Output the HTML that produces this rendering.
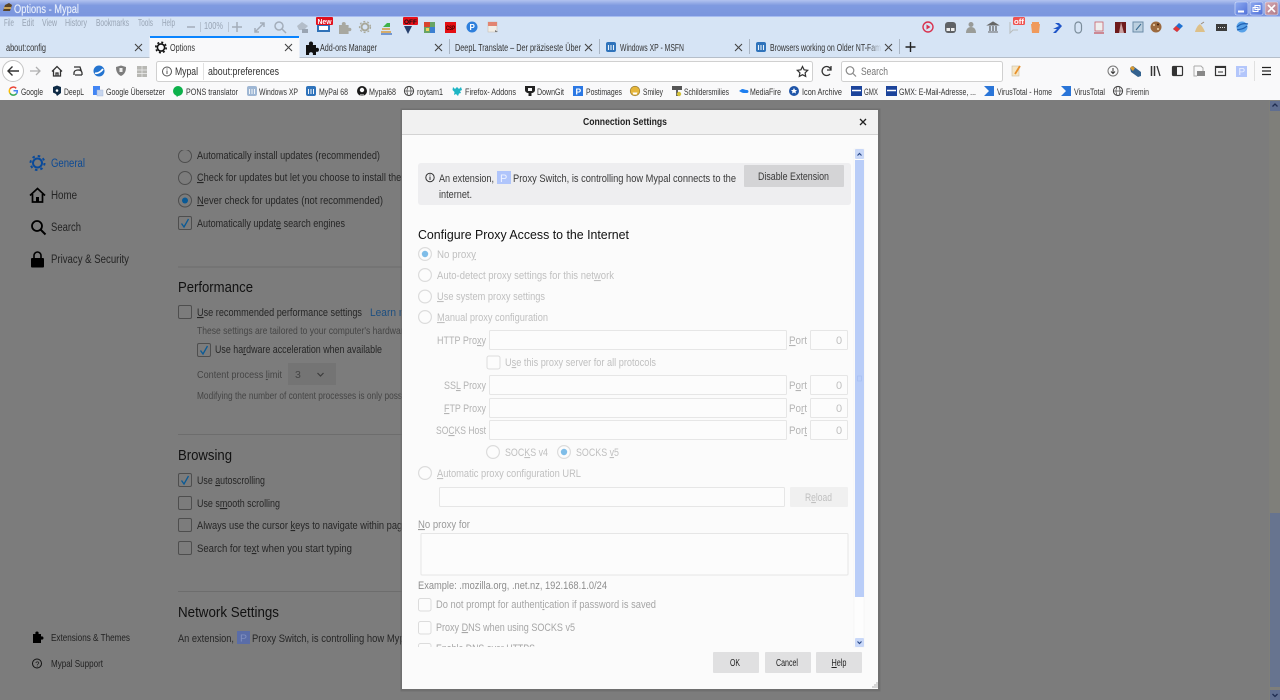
<!DOCTYPE html>
<html><head><meta charset="utf-8"><title>Options - Mypal</title>
<style>
html,body{margin:0;padding:0;background:#7c7c7c;width:1280px;height:700px;overflow:hidden}
svg{display:block;position:absolute;left:0;top:0;filter:blur(.3px)}
text{font-family:"Liberation Sans",sans-serif;font-size:10px;fill:#333;white-space:pre}
.u{text-decoration:underline}
.title{font-size:11.5px;fill:#e6edfb;stroke:#e6edfb;stroke-width:.2px}
.menu{font-size:10.5px;fill:#98a4b4}
.tab{font-size:10px;fill:#333}
.nav{font-size:11px;fill:#333}
.bm{font-size:9.5px;fill:#333}
.side{font-size:11.5px;fill:#242424}
.pg{font-size:11px;fill:#262626}
.pgl{font-size:10.5px;fill:#454545}
.h{font-size:15px;fill:#111}
.dis{font-size:11px;fill:#c0c0c0}
.dlg{font-size:11px;fill:#3a3a3a}
.lbl{font-size:11px;fill:#b4b4b4}
.f{fill:#fcfcfc;stroke:#e6e6e6}
.r{fill:#fcfcfc;stroke:#dcdcdc;stroke-width:1.2}
.c{fill:#fcfcfc;stroke:#dcdcdc;rx:2}
.pc{fill:#7c7c7c;stroke:#4e4e4e;stroke-width:1}
.ic{fill:none;stroke:#444;stroke-width:1.1}
.gi{fill:none;stroke:#a3adba;stroke-width:1.5}
.btn{fill:#e0e0e1}
</style></head><body>
<svg width="1280" height="700" viewBox="0 0 1280 700" xmlns="http://www.w3.org/2000/svg">
<defs>
<linearGradient id="tb" x1="0" y1="0" x2="0" y2="1"><stop offset="0" stop-color="#b3c3ef"/><stop offset=".3" stop-color="#7f9ae0"/><stop offset="1" stop-color="#7a95dd"/></linearGradient>
<linearGradient id="wb" x1="0" y1="0" x2="1" y2="1"><stop offset="0" stop-color="#8fabf0"/><stop offset="1" stop-color="#4f70d8"/></linearGradient>
<linearGradient id="wc" x1="0" y1="0" x2="1" y2="1"><stop offset="0" stop-color="#d6aab2"/><stop offset="1" stop-color="#b07a88"/></linearGradient>
<linearGradient id="fade" x1="0" y1="0" x2="1" y2="0"><stop offset="0" stop-color="#d6e4f5" stop-opacity="0"/><stop offset="1" stop-color="#d6e4f5"/></linearGradient>
<clipPath id="mainclip"><rect x="170" y="150" width="232" height="550"/></clipPath>
<clipPath id="dlgclip"><rect x="410" y="140" width="444" height="507"/></clipPath>
</defs>

<!-- window chrome -->
<rect width="1280" height="18" fill="url(#tb)"/>
<rect y="16" width="1280" height="1" fill="#a8bdf0"/>
<rect y="17" width="1280" height="41" fill="#d6e4f5"/>
<path d="M3 11 L5 5 L9 3 L12 5 L10 11 Z" fill="#5a4326"/><path d="M4 7h7v2H4z" fill="#c9a35c"/>
<text class="title" x="14" y="13" textLength="65" lengthAdjust="spacingAndGlyphs">Options - Mypal</text>
<rect x="1235" y="2" width="13" height="13" rx="2" fill="url(#wb)" stroke="#dfe8fb" stroke-width=".6"/><rect x="1238" y="10.5" width="6" height="2" fill="#fff"/>
<rect x="1250" y="2" width="13" height="13" rx="2" fill="url(#wb)" stroke="#dfe8fb" stroke-width=".6"/><path d="M1255 5.5h5v4h-5zM1253 7.5h5v4h-5z" fill="none" stroke="#fff"/>
<rect x="1265" y="2" width="13" height="13" rx="2" fill="url(#wc)" stroke="#dfe8fb" stroke-width=".6"/><path d="M1268 5l7 7M1275 5l-7 7" stroke="#fff" stroke-width="1.6"/>

<!-- menu -->
<text class="menu" y="26" x="4" textLength="10" lengthAdjust="spacingAndGlyphs">File</text>
<text class="menu" y="26" x="22" textLength="12" lengthAdjust="spacingAndGlyphs">Edit</text>
<text class="menu" y="26" x="42" textLength="15" lengthAdjust="spacingAndGlyphs">View</text>
<text class="menu" y="26" x="65" textLength="22" lengthAdjust="spacingAndGlyphs">History</text>
<text class="menu" y="26" x="96" textLength="33" lengthAdjust="spacingAndGlyphs">Bookmarks</text>
<text class="menu" y="26" x="138" textLength="15" lengthAdjust="spacingAndGlyphs">Tools</text>
<text class="menu" y="26" x="162" textLength="13" lengthAdjust="spacingAndGlyphs">Help</text>
<path class="gi" d="M187 27h8"/>
<path d="M200.500 22v10M228.500 22v10" stroke="#b9c5d4"/>
<text class="menu" y="29" x="204" textLength="19" lengthAdjust="spacingAndGlyphs">100%</text>
<path class="gi" d="M232 27h10M237 22v10"/>
<path class="gi" d="M255 32l9-9M260 23h4v4M255 28v4h4"/>
<circle class="gi" cx="279" cy="26" r="4"/><path class="gi" d="M282 29l4 4"/>
<path d="M297 26l5-4 6 4-4 4h-5z" fill="#b3bdc9"/><rect x="302" y="29" width="6" height="4" fill="#9aa5b3"/>

<!-- extension icons left -->
<rect x="317" y="23" width="13" height="9" fill="#2f72b8"/><rect x="319" y="26" width="9" height="4" fill="#fff"/>
<rect x="316" y="17" width="17" height="8" rx="1" fill="#e2101c"/>
<text x="317.500" y="24" style="font-size:7px;font-weight:bold;fill:#fff" textLength="14" lengthAdjust="spacingAndGlyphs">New</text>
<path d="M339 25h3c-.6-1.600.2-3 1.800-3s2.400 1.400 1.800 3h3v3c1.600-.6 2.800.2 2.800 1.500s-1.200 2.100-2.800 1.500v3h-9.600z" fill="#a8a8a0"/>
<circle cx="365" cy="27" r="3.500" fill="none" stroke="#a8a89a" stroke-width="2"/><circle cx="365" cy="27" r="5.500" fill="none" stroke="#a8a89a" stroke-width="1.200" stroke-dasharray="2 2"/>
<path d="M381 32h10M382 29h8" stroke="#d69a3d" stroke-width="1.500"/><path d="M383 27h7v-4h-3z" fill="#3fb24a"/><path d="M381 34h11" stroke="#4a78c0" stroke-width="1.400"/>
<path d="M404 26h8l-4 8z" fill="#27406e"/>
<rect x="403" y="17" width="15" height="8" rx="1" fill="#e8101a"/>
<text x="404" y="24" style="font-size:6.500px;font-weight:bold;fill:#111" textLength="13" lengthAdjust="spacingAndGlyphs">OFF</text>
<rect x="424" y="22" width="11" height="11" fill="#67a464"/><rect x="424" y="22" width="6" height="5" fill="#d8452f"/><rect x="430" y="27" width="5" height="6" fill="#3c7fd0"/><rect x="426" y="28" width="3" height="3" fill="#ecd25a"/>
<rect x="445" y="22" width="11" height="11" fill="#e50f13"/>
<text x="446" y="30" style="font-size:6px;font-weight:bold;fill:#300" textLength="9" lengthAdjust="spacingAndGlyphs">CSP</text>
<circle cx="472" cy="27" r="5.500" fill="#2e7fdc"/><text x="469.500" y="30" style="font-size:8px;font-weight:bold;fill:#fff">P</text>
<rect x="488" y="22" width="9" height="10" fill="#f1ede6" stroke="#c8c0b8" stroke-width=".6"/><rect x="488" y="22" width="9" height="4" fill="#e28470"/><path d="M495 30l3 2h-3z" fill="#777"/>

<!-- extension icons right -->
<circle cx="928" cy="27" r="5" fill="none" stroke="#d8324f" stroke-width="1.400"/><path d="M926.500 24.500v5l4-2.500z" fill="#d8324f"/>
<rect x="945" y="22" width="11" height="11" rx="3" fill="#5f6266"/><rect x="946.500" y="28" width="3.500" height="3" fill="#eee"/><rect x="951" y="28" width="3.500" height="3" fill="#eee"/>
<circle cx="971" cy="24.500" r="2.500" fill="#989a98"/><path d="M966 33c0-4 2-6 5-6s5 2 5 6z" fill="#9a9c98"/>
<path d="M988 25l5-3 5 3zM988 32h10" fill="#666" stroke="#666"/><path d="M990 26v5M993 26v5M996 26v5" stroke="#666" stroke-width="1.300"/>
<path d="M1010 22v11l3-3h5" fill="none" stroke="#b8bcbc"/>
<rect x="1013" y="17" width="12" height="8" rx="1.500" fill="#ef5350"/>
<text x="1014" y="24" style="font-size:7px;font-weight:bold;fill:#fff" textLength="10" lengthAdjust="spacingAndGlyphs">off</text>
<path d="M1031 24h9l-1 9h-7z" fill="#f09a5c"/><rect x="1032" y="22" width="7" height="2" fill="#f09a5c"/>
<path d="M1053 29l6-3-4-3h4l3 3-6 7h-3l4-4z" fill="#1f55c8"/>
<rect x="1075" y="22" width="6.500" height="11" rx="3.200" fill="none" stroke="#7b8d9b" stroke-width="1.200"/>
<rect x="1095" y="22" width="8" height="9" fill="#eee" stroke="#c9606a" stroke-width=".8"/><path d="M1094 33h10" stroke="#c9606a" stroke-width="1.400"/>
<rect x="1115" y="22" width="11" height="11" fill="#6e1b1c"/><path d="M1121 22l3 11h-5z" fill="#c9a0a0"/>
<rect x="1133" y="22" width="10" height="10" fill="#bcd0e0" stroke="#6b8ba8"/><path d="M1136 30l5-6" stroke="#36688f"/>
<circle cx="1156" cy="27" r="5.500" fill="#9c6a3f"/><circle cx="1154" cy="25" r="1" fill="#f0d7b0"/><circle cx="1158" cy="29" r="1" fill="#f0d7b0"/><circle cx="1158" cy="24.500" r="1" fill="#402010"/>
<path d="M1173 29l6-6 4 3-6 6z" fill="#1f70d0"/><path d="M1173 29l3-3 4 3-3 3z" fill="#e03636"/>
<path d="M1195 32c1-4 3-7 5-8 2 2 4 5 5 8z" fill="#ddc089"/><path d="M1201 24l3-2" stroke="#9b8b78"/>
<rect x="1216" y="24" width="11" height="7" fill="#3c3c3c"/><path d="M1218 27.500h7" stroke="#ddd" stroke-dasharray="1 1"/>
<circle cx="1242" cy="27" r="5.500" fill="#57a1e8"/><path d="M1237 27c3-3 7-4 11-3M1237 30c4-1 7-1 10-4" stroke="#1f5fb0" stroke-width="1.200" fill="none"/>

<!-- tabs -->
<rect y="57" width="1280" height="1" fill="#b5bec9"/>
<path d="M149.500 37h150v21h-150z" fill="#f9f9fa"/>
<rect x="150" y="36" width="149" height="2" fill="#0a84ff"/>
<path d="M449.500 39v15M599.500 39v15M749.500 39v15M899.500 39v15" stroke="#a9b5c4"/>
<text class="tab" x="6" y="51" textLength="40" lengthAdjust="spacingAndGlyphs">about:config</text>
<path class="ic" d="M135 44l7 7M142 44l-7 7"/>
<g fill="#111"><circle cx="161" cy="47.500" r="3.600" fill="none" stroke="#111" stroke-width="1.600"/><circle cx="161" cy="47.500" r="5.200" fill="none" stroke="#111" stroke-width="1.600" stroke-dasharray="2 2.100"/></g>
<text class="tab" x="170" y="51" textLength="25" lengthAdjust="spacingAndGlyphs">Options</text>
<path class="ic" d="M285 44l7 7M292 44l-7 7"/>
<path d="M306 45h3.200c-.8-2 .2-3.500 1.800-3.500s2.600 1.500 1.800 3.500H316v3c2-.8 3 .3 3 1.800s-1 2.600-3 1.800V55h-3.200c.6-1.800-.4-2.800-1.800-2.800s-2.400 1-1.800 2.800H306z" fill="#111"/>
<text class="tab" x="320" y="51" textLength="57" lengthAdjust="spacingAndGlyphs">Add-ons Manager</text>
<path class="ic" d="M435 44l7 7M442 44l-7 7"/>
<text class="tab" x="455" y="51" textLength="126" lengthAdjust="spacingAndGlyphs">DeepL Translate – Der präziseste Über</text>
<path class="ic" d="M585 44l7 7M592 44l-7 7"/>
<g><rect x="606" y="42" width="10" height="10" rx="2" fill="#2f73bb"/><path d="M608.500 50v-5M611 50v-5M613.500 50v-5" stroke="#e8f0f8" stroke-width="1.100"/></g>
<text class="tab" x="620" y="51" textLength="64" lengthAdjust="spacingAndGlyphs">Windows XP - MSFN</text>
<path class="ic" d="M735 44l7 7M742 44l-7 7"/>
<g><rect x="756" y="42" width="10" height="10" rx="2" fill="#2f73bb"/><path d="M758.500 50v-5M761 50v-5M763.500 50v-5" stroke="#e8f0f8" stroke-width="1.100"/></g>
<text class="tab" x="770" y="51" textLength="111" lengthAdjust="spacingAndGlyphs">Browsers working on Older NT-Fam</text>
<rect x="868" y="42" width="14" height="12" fill="url(#fade)"/>
<path class="ic" d="M885 44l7 7M892 44l-7 7"/>
<path d="M910.500 42v10M905.500 47h10" stroke="#222" stroke-width="1.400"/>

<!-- nav bar -->
<rect y="58" width="1280" height="26" fill="#f9f9fa"/>
<circle cx="13" cy="71" r="10.500" fill="#fff" stroke="#c4c4c4"/>
<path d="M19 71H8M12.500 66.500L8 71l4.500 4.500" fill="none" stroke="#333" stroke-width="1.400"/>
<path d="M30 71h10M36 67l4 4-4 4" fill="none" stroke="#b0b0b0" stroke-width="1.300"/>
<path d="M52 71.500l5-5 5 5M53.500 70.500V76h7v-5.500M56 76v-3h2v3" fill="none" stroke="#333" stroke-width="1.300"/>
<path d="M74 67h6l1 3h-3M75 75h7M74 75v-2c0-2 2-3 4-3s4 1 4 3v2" fill="none" stroke="#333" stroke-width="1.300"/>
<circle cx="99" cy="71" r="5.500" fill="#2474d0"/><path d="M95 73c2 1 6-1 8-4" stroke="#fff" stroke-width="1.800" fill="none"/>
<path d="M116 67l5-1.500 5 1.500c0 4-1 7-5 9-4-2-5-5-5-9z" fill="#7d7d7d"/><rect x="119.500" y="68" width="3" height="4" fill="#eee"/>
<rect x="137" y="66" width="10" height="11" fill="#b8b8b4"/><path d="M142 66v11M137 70h10M137 73.500h10" stroke="#eee" stroke-width=".7"/>
<rect x="156.500" y="61.500" width="656" height="20" rx="2" fill="#fff" stroke="#d0d0d0"/>
<circle cx="167" cy="71.500" r="4.500" fill="none" stroke="#555"/><path d="M167 70.500v3.500M167 68.500v1" stroke="#555"/>
<text class="nav" x="175" y="75" textLength="23" lengthAdjust="spacingAndGlyphs">Mypal</text>
<path d="M203.500 63v17" stroke="#e2e2e2"/>
<text class="nav" x="208" y="75" textLength="71" lengthAdjust="spacingAndGlyphs">about:preferences</text>
<path d="M802.500 66.500l1.600 3.300 3.600.5-2.600 2.500.6 3.600-3.200-1.700-3.200 1.700.6-3.600-2.600-2.500 3.600-.5z" fill="none" stroke="#333" stroke-width="1.200"/>
<path d="M831 70a4.500 4.500 0 1 0-1 4M831 66v4h-4" fill="none" stroke="#333" stroke-width="1.300"/>
<rect x="841.500" y="61.500" width="161" height="20" rx="2" fill="#fff" stroke="#d0d0d0"/>
<circle cx="850" cy="70.500" r="3.800" fill="none" stroke="#888" stroke-width="1.200"/><path d="M853 73.500l3 3" stroke="#888" stroke-width="1.200"/>
<text class="nav" x="861" y="75" style="fill:#777" textLength="27" lengthAdjust="spacingAndGlyphs">Search</text>
<rect x="1012" y="66" width="7" height="10" fill="#f5e6c5" stroke="#c8bda6" stroke-width=".6"/><path d="M1015 74l5-8" stroke="#e8902a" stroke-width="1.800"/>
<circle cx="1113" cy="71" r="5" fill="none" stroke="#777"/><path d="M1113 68v5M1111 71.500l2 2 2-2" fill="none" stroke="#333"/>
<path d="M1130 68l3-2 8 6v4l-3 1-7-5z" fill="#34628f"/><path d="M1130 68l2-2 3 2-2 3z" fill="#d89a32"/>
<path d="M1151.500 66v10M1154.500 66v10" stroke="#333" stroke-width="1.500"/><path d="M1157 66l3 10" stroke="#333" stroke-width="1.300"/>
<rect x="1172.500" y="66.500" width="10" height="9" rx="1" fill="none" stroke="#333" stroke-width="1.200"/><rect x="1173" y="67" width="4" height="8" fill="#333"/>
<path d="M1194 66h7l2 2v3M1194 66v10h3" fill="none" stroke="#aaa"/><rect x="1197" y="71" width="8" height="5" fill="#888"/>
<rect x="1215.500" y="66.500" width="10" height="9" fill="none" stroke="#333" stroke-width="1.200"/><rect x="1215" y="66" width="11" height="2" fill="#333"/><path d="M1218 72h5" stroke="#333"/>
<rect x="1236" y="66" width="11" height="11" fill="#b3c6fb"/>
<text x="1238.500" y="75" style="font-size:10px;fill:#eef2ff">P</text>
<path d="M1254.500 61v20" stroke="#e0e0e0"/>
<path d="M1262 67.500h9M1262 71h9M1262 74.500h9" stroke="#222" stroke-width="1.300"/>

<!-- bookmarks bar -->
<rect y="84" width="1280" height="16" fill="#f9f9fa"/>
<path d="M16.200 88.300a4 4 0 0 0-6.200 .5" fill="none" stroke="#ea4335" stroke-width="1.500"/><path d="M10 88.800a4 4 0 0 0 0 4.400" fill="none" stroke="#fbbc05" stroke-width="1.500"/><path d="M10 93.200a4 4 0 0 0 6.500 .5" fill="none" stroke="#34a853" stroke-width="1.500"/><path d="M16.500 93.700a4 4 0 0 0 .8-2.900H13.500" fill="none" stroke="#4285f4" stroke-width="1.500"/>
<text class="bm" x="21" y="95" textLength="22" lengthAdjust="spacingAndGlyphs">Google</text>
<path d="M53 87l4-1.500 4 1.500v6l-4 3-1-2-3-1.500z" fill="#0f2b46"/><circle cx="57" cy="90.500" r="1.300" fill="#fff"/>
<text class="bm" x="64" y="95" textLength="20" lengthAdjust="spacingAndGlyphs">DeepL</text>
<rect x="93" y="86" width="7" height="9" fill="#4285f4"/><rect x="97" y="90" width="6" height="6" fill="#c7d5ee" stroke="#9fb3d8" stroke-width=".4"/>
<text class="bm" x="106" y="95" textLength="59" lengthAdjust="spacingAndGlyphs">Google Übersetzer</text>
<circle cx="178" cy="91" r="5" fill="#0db14b"/><path d="M176 95l1 2 2-2z" fill="#0db14b"/>
<text class="bm" x="186" y="95" textLength="52" lengthAdjust="spacingAndGlyphs">PONS translator</text>
<g><rect x="247" y="86" width="10" height="10" rx="2" fill="#9fb7d4"/><path d="M249.500 94v-5M252 94v-5M254.500 94v-5" stroke="#f0f4f8" stroke-width="1"/></g>
<text class="bm" x="259" y="95" textLength="39" lengthAdjust="spacingAndGlyphs">Windows XP</text>
<g><rect x="306" y="86" width="10" height="10" rx="2" fill="#2f73bb"/><path d="M308.500 94v-5M311 94v-5M313.500 94v-5" stroke="#f0f4f8" stroke-width="1"/></g>
<text class="bm" x="319" y="95" textLength="29" lengthAdjust="spacingAndGlyphs">MyPal 68</text>
<circle cx="362" cy="91" r="5" fill="#1a1a1a"/><circle cx="362" cy="90" r="2.200" fill="#f9f9fa"/><path d="M360 96h4v-2h-4z" fill="#f9f9fa" opacity=".5"/>
<text class="bm" x="369" y="95" textLength="27" lengthAdjust="spacingAndGlyphs">Mypal68</text>
<circle cx="409" cy="91" r="4.600" fill="none" stroke="#444"/><ellipse cx="409" cy="91" rx="2" ry="4.600" fill="none" stroke="#444" stroke-width=".7"/><path d="M404.500 91h9" stroke="#444" stroke-width=".7"/>
<text class="bm" x="417" y="95" textLength="26" lengthAdjust="spacingAndGlyphs">roytam1</text>
<path d="M453 87l2 2 2-2 2 2 2-2 1 3-2 1 1 2-2 .5-1 2.500-2-2-2 1 .500-3-2-2z" fill="#1fb5c4"/>
<text class="bm" x="465" y="95" textLength="51" lengthAdjust="spacingAndGlyphs">Firefox- Addons</text>
<path d="M525 86h10v4c0 2-2 3-3.500 3v3h-3v-3c-1.500 0-3.500-1-3.500-3z" fill="#222"/><path d="M528 88h4v3h-4z" fill="#f9f9fa"/>
<text class="bm" x="537" y="95" textLength="27" lengthAdjust="spacingAndGlyphs">DownGit</text>
<rect x="573" y="86" width="10" height="10" fill="#2b78e4"/><text x="575.500" y="94.500" style="font-size:8.500px;font-weight:bold;fill:#fff">P</text>
<text class="bm" x="586" y="95" textLength="36" lengthAdjust="spacingAndGlyphs">Postimages</text>
<circle cx="635" cy="91" r="4.800" fill="#e6b63a" stroke="#8c7230" stroke-width=".6"/><path d="M632.500 92.500h5l-1 2h-3z" fill="#fff"/>
<text class="bm" x="643" y="95" textLength="20" lengthAdjust="spacingAndGlyphs">Smiley</text>
<rect x="672" y="86" width="10" height="4" fill="#555"/><path d="M677 90v6" stroke="#333" stroke-width="1.500"/><circle cx="679" cy="94" r="2.200" fill="#d4c23a"/>
<text class="bm" x="684" y="95" textLength="45" lengthAdjust="spacingAndGlyphs">Schildersmilies</text>
<path d="M739 91l3-2c2 0 3 1 5 1s2 3 0 3h-3c-2 0-3-1-5-2z" fill="#1d7ff0"/>
<text class="bm" x="750" y="95" textLength="31" lengthAdjust="spacingAndGlyphs">MediaFire</text>
<circle cx="794" cy="91" r="5" fill="#1f55a8"/><path d="M794 88l1 2h2l-1.500 1.500.5 2-2-1-2 1 .5-2L791 90h2z" fill="#fff"/>
<text class="bm" x="802" y="95" textLength="40" lengthAdjust="spacingAndGlyphs">Icon Archive</text>
<rect x="851" y="86" width="11" height="10" fill="#1c449b"/><path d="M852 90.500h9" stroke="#fff" stroke-width="1.500"/>
<text class="bm" x="864" y="95" textLength="14" lengthAdjust="spacingAndGlyphs">GMX</text>
<rect x="886" y="86" width="11" height="10" fill="#1c449b"/><path d="M887 90.500h9" stroke="#fff" stroke-width="1.500"/>
<text class="bm" x="899" y="95" textLength="77" lengthAdjust="spacingAndGlyphs">GMX: E-Mail-Adresse, ...</text>
<path d="M984 86h10v10h-10l5-5z" fill="#2a75d8"/>
<text class="bm" x="997" y="95" textLength="55" lengthAdjust="spacingAndGlyphs">VirusTotal - Home</text>
<path d="M1061 86h10v10h-10l5-5z" fill="#2a75d8"/>
<text class="bm" x="1074" y="95" textLength="31" lengthAdjust="spacingAndGlyphs">VirusTotal</text>
<circle cx="1118" cy="91" r="4.600" fill="none" stroke="#444"/><ellipse cx="1118" cy="91" rx="2" ry="4.600" fill="none" stroke="#444" stroke-width=".7"/><path d="M1113.500 91h9" stroke="#444" stroke-width=".7"/>
<text class="bm" x="1126" y="95" textLength="23" lengthAdjust="spacingAndGlyphs">Firemin</text>

<!-- page (dimmed) -->
<rect y="100" width="1280" height="600" fill="#7c7c7c"/>
<!-- sidebar -->
<circle cx="37.500" cy="163" r="4.500" fill="none" stroke="#0a4a9a" stroke-width="2"/><circle cx="37.500" cy="163" r="7" fill="none" stroke="#0a4a9a" stroke-width="2" stroke-dasharray="2.500 3"/>
<text class="side" x="51" y="167" style="fill:#0d4a94" textLength="34" lengthAdjust="spacingAndGlyphs">General</text>
<path d="M30 195.500l7.500-7 7.500 7M32.500 194v8h10v-8" fill="none" stroke="#000" stroke-width="1.700"/><rect x="36" y="197" width="3" height="5" fill="#000"/>
<text class="side" x="51" y="199" textLength="26" lengthAdjust="spacingAndGlyphs">Home</text>
<circle cx="37" cy="226" r="5" fill="none" stroke="#000" stroke-width="1.800"/><path d="M40.500 229.500l5 5" stroke="#000" stroke-width="2"/>
<text class="side" x="51" y="231" textLength="30" lengthAdjust="spacingAndGlyphs">Search</text>
<rect x="31" y="258" width="13" height="9.500" rx="1" fill="#000"/><path d="M34 258v-2.500a3.500 3.500 0 0 1 7 0v2.500" fill="none" stroke="#000" stroke-width="1.600"/>
<text class="side" x="51" y="263" textLength="78" lengthAdjust="spacingAndGlyphs">Privacy &amp; Security</text>
<path d="M33 634h2.500c-.5-1.500.2-2.500 1.500-2.500s2 1 1.500 2.500H41v2.500c1.500-.5 2.500.2 2.500 1.500s-1 2-2.500 1.500V643h-8z" fill="#000"/>
<text class="pgl" x="51" y="641" style="fill:#222" textLength="79" lengthAdjust="spacingAndGlyphs">Extensions &amp; Themes</text>
<circle cx="37" cy="663.500" r="4.500" fill="none" stroke="#111"/><text x="35.300" y="666.500" style="font-size:7.500px;fill:#111">?</text>
<text class="pgl" x="51" y="667" style="fill:#222" textLength="52" lengthAdjust="spacingAndGlyphs">Mypal Support</text>

<!-- main -->
<g clip-path="url(#mainclip)">
<circle class="pc" cx="185" cy="156" r="6.500"/>
<text class="pg" x="197" y="159" textLength="183" lengthAdjust="spacingAndGlyphs">Automatically install updates (recommended)</text>
<circle class="pc" cx="185" cy="178" r="6.500"/>
<text class="pg" x="197" y="181" textLength="212" lengthAdjust="spacingAndGlyphs"><tspan class="u">C</tspan>heck for updates but let you choose to install them</text>
<circle class="pc" cx="185" cy="200.500" r="6.500"/><circle cx="185" cy="200.500" r="3" fill="#0a5a96"/>
<text class="pg" x="197" y="204" textLength="186" lengthAdjust="spacingAndGlyphs"><tspan class="u">N</tspan>ever check for updates (not recommended)</text>
<rect class="pc" x="178.500" y="216.500" width="13" height="13" rx="1.500"/><path d="M181.500 223.500l2.500 3.500 4.500-8" fill="none" stroke="#0a5a96" stroke-width="1.300"/>
<text class="pg" x="197" y="227" textLength="148" lengthAdjust="spacingAndGlyphs">Automatically updat<tspan class="u">e</tspan> search engines</text>
<rect x="178" y="266.500" width="224" height="1" fill="#6d6d6d"/>
<text class="h" x="178" y="292" textLength="75" lengthAdjust="spacingAndGlyphs">Performance</text>
<rect class="pc" x="178.500" y="305.500" width="13" height="13" rx="1.500"/>
<text class="pg" x="197" y="316" textLength="165" lengthAdjust="spacingAndGlyphs"><tspan class="u">U</tspan>se recommended performance settings</text>
<text class="pg" x="370" y="316" style="fill:#1d4f80" textLength="52" lengthAdjust="spacingAndGlyphs">Learn more</text>
<text class="pgl" x="197" y="334" textLength="228" lengthAdjust="spacingAndGlyphs">These settings are tailored to your computer's hardware and</text>
<rect class="pc" x="197.500" y="343.500" width="13" height="13" rx="1.500"/><path d="M200.500 350.500l2.500 3.500 4.500-8" fill="none" stroke="#0a5a96" stroke-width="1.300"/>
<text class="pg" x="215" y="353" textLength="167" lengthAdjust="spacingAndGlyphs">Use ha<tspan class="u">r</tspan>dware acceleration when available</text>
<text class="pgl" x="197" y="378" textLength="85" lengthAdjust="spacingAndGlyphs">Content process <tspan class="u">l</tspan>imit</text>
<rect x="288" y="363" width="48" height="22" fill="#747474"/>
<text class="pgl" x="295" y="378">3</text>
<path d="M317.500 373l3 3 3-3" fill="none" stroke="#3c3c3c" stroke-width="1.200"/>
<text class="pgl" x="197" y="399" textLength="218" lengthAdjust="spacingAndGlyphs">Modifying the number of content processes is only possible</text>
<rect x="178" y="434" width="224" height="1" fill="#6d6d6d"/>
<text class="h" x="178" y="460" textLength="54" lengthAdjust="spacingAndGlyphs">Browsing</text>
<rect class="pc" x="178.500" y="473.500" width="13" height="13" rx="1.500"/><path d="M181.500 480.500l2.500 3.500 4.500-8" fill="none" stroke="#0a5a96" stroke-width="1.300"/>
<text class="pg" x="197" y="484" textLength="68" lengthAdjust="spacingAndGlyphs">Use <tspan class="u">a</tspan>utoscrolling</text>
<rect class="pc" x="178.500" y="496.500" width="13" height="13" rx="1.500"/>
<text class="pg" x="197" y="507" textLength="83" lengthAdjust="spacingAndGlyphs">Use s<tspan class="u">m</tspan>ooth scrolling</text>
<rect class="pc" x="178.500" y="518.500" width="13" height="13" rx="1.500"/>
<text class="pg" x="197" y="529" textLength="215" lengthAdjust="spacingAndGlyphs">Always use the cursor <tspan class="u">k</tspan>eys to navigate within pages</text>
<rect class="pc" x="178.500" y="541.500" width="13" height="13" rx="1.500"/>
<text class="pg" x="197" y="552" textLength="155" lengthAdjust="spacingAndGlyphs">Search for te<tspan class="u">x</tspan>t when you start typing</text>
<rect x="178" y="591" width="224" height="1" fill="#6d6d6d"/>
<text class="h" x="178" y="617" textLength="101" lengthAdjust="spacingAndGlyphs">Network Settings</text>
<text class="pg" x="178" y="642" textLength="56" lengthAdjust="spacingAndGlyphs">An extension,</text>
<rect x="237" y="631" width="13" height="13" fill="#5a6da8"/><text x="240" y="641.500" style="font-size:10.500px;fill:#8090c0">P</text>
<text class="pg" x="252" y="642" textLength="160" lengthAdjust="spacingAndGlyphs">Proxy Switch, is controlling how Mypal</text>
</g>

<!-- page scrollbar -->
<rect x="1269" y="100" width="11" height="600" fill="#7f7f7a"/>
<rect x="1270" y="101" width="10" height="10" fill="#5f6e90"/><path d="M1272.500 106.500l2.500-2.500 2.500 2.500" fill="none" stroke="#1f2c50" stroke-width="1.300"/>
<rect x="1270" y="513" width="10" height="174" fill="#67748f"/>
<rect x="1270" y="690" width="10" height="10" fill="#5f6e90"/><path d="M1272.500 694l2.500 2.500 2.500-2.500" fill="none" stroke="#1f2c50" stroke-width="1.300"/>

<!-- dialog -->
<rect x="400.500" y="108.500" width="480" height="583" fill="#6a6a6a" opacity=".7"/>
<rect x="402" y="110" width="476" height="579" fill="#fbfbfb"/>
<rect x="402" y="110" width="476" height="24" fill="#f1f1f1"/>
<rect x="402" y="134" width="476" height="1" fill="#d3d3d3"/>
<text x="583" y="125" style="font-size:10px;font-weight:bold;fill:#222" textLength="84" lengthAdjust="spacingAndGlyphs">Connection Settings</text>
<path d="M860 119l6 6M866 119l-6 6" stroke="#222" stroke-width="1.300"/>

<rect x="418" y="163" width="433" height="42" rx="3" fill="#eeeef0"/>
<circle cx="430" cy="177.500" r="4.200" fill="none" stroke="#333" stroke-width="1"/><path d="M430 176.500v3.500M430 174.500v1" stroke="#333"/>
<text class="dlg" x="439" y="182" textLength="55" lengthAdjust="spacingAndGlyphs">An extension,</text>
<rect x="497" y="171" width="14" height="13" fill="#b0c5fb"/><text x="500" y="182" style="font-size:11px;fill:#eef2ff">P</text>
<text class="dlg" x="513" y="182" textLength="223" lengthAdjust="spacingAndGlyphs">Proxy Switch, is controlling how Mypal connects to the</text>
<text class="dlg" x="439" y="198" textLength="33" lengthAdjust="spacingAndGlyphs">internet.</text>
<rect x="744" y="165" width="100" height="22" rx="1" fill="#d4d4d6"/>
<text class="dlg" x="758" y="180" textLength="71" lengthAdjust="spacingAndGlyphs">Disable Extension</text>
<text x="418" y="239" style="font-size:13px;fill:#111" textLength="211" lengthAdjust="spacingAndGlyphs">Configure Proxy Access to the Internet</text>

<circle class="r" cx="425" cy="254" r="6.400"/><circle cx="425" cy="254" r="3.200" fill="#7fbde8"/>
<text class="dis" x="437" y="258" textLength="39" lengthAdjust="spacingAndGlyphs">No prox<tspan class="u">y</tspan></text>
<circle class="r" cx="425" cy="275" r="6.400"/>
<text class="dis" x="437" y="279" textLength="177" lengthAdjust="spacingAndGlyphs">Auto-detect proxy settings for this net<tspan class="u">w</tspan>ork</text>
<circle class="r" cx="425" cy="296.500" r="6.400"/>
<text class="dis" x="437" y="300" textLength="108" lengthAdjust="spacingAndGlyphs"><tspan class="u">U</tspan>se system proxy settings</text>
<circle class="r" cx="425" cy="317" r="6.400"/>
<text class="dis" x="437" y="321" textLength="111" lengthAdjust="spacingAndGlyphs"><tspan class="u">M</tspan>anual proxy configuration</text>

<text class="lbl" x="437" y="344" textLength="49" lengthAdjust="spacingAndGlyphs">HTTP Pro<tspan class="u">x</tspan>y</text>
<rect class="f" x="489.500" y="330.500" width="297" height="19" rx="1"/>
<text class="lbl" x="789" y="344" textLength="18" lengthAdjust="spacingAndGlyphs"><tspan class="u">P</tspan>ort</text>
<rect class="f" x="810.500" y="330.500" width="37" height="19" rx="1"/>
<text class="dis" x="836" y="344">0</text>
<rect class="c" x="487" y="356" width="13" height="13"/>
<text class="dis" x="505" y="366" textLength="151" lengthAdjust="spacingAndGlyphs">U<tspan class="u">s</tspan>e this proxy server for all protocols</text>

<text class="lbl" x="444" y="389" textLength="42" lengthAdjust="spacingAndGlyphs">SS<tspan class="u">L</tspan> Proxy</text>
<rect class="f" x="489.500" y="375.500" width="297" height="19" rx="1"/>
<text class="lbl" x="789" y="389" textLength="18" lengthAdjust="spacingAndGlyphs">P<tspan class="u">o</tspan>rt</text>
<rect class="f" x="810.500" y="375.500" width="37" height="19" rx="1"/>
<text class="dis" x="836" y="389">0</text>

<text class="lbl" x="444" y="412" textLength="42" lengthAdjust="spacingAndGlyphs"><tspan class="u">F</tspan>TP Proxy</text>
<rect class="f" x="489.500" y="398.500" width="297" height="19" rx="1"/>
<text class="lbl" x="789" y="412" textLength="18" lengthAdjust="spacingAndGlyphs">Po<tspan class="u">r</tspan>t</text>
<rect class="f" x="810.500" y="398.500" width="37" height="19" rx="1"/>
<text class="dis" x="836" y="412">0</text>

<text class="lbl" x="436" y="434" textLength="50" lengthAdjust="spacingAndGlyphs">SO<tspan class="u">C</tspan>KS Host</text>
<rect class="f" x="489.500" y="420.500" width="297" height="19" rx="1"/>
<text class="lbl" x="789" y="434" textLength="18" lengthAdjust="spacingAndGlyphs">Por<tspan class="u">t</tspan></text>
<rect class="f" x="810.500" y="420.500" width="37" height="19" rx="1"/>
<text class="dis" x="836" y="434">0</text>

<circle class="r" cx="493" cy="452" r="6.400"/>
<text class="dis" x="505" y="456" textLength="43" lengthAdjust="spacingAndGlyphs">SOC<tspan class="u">K</tspan>S v4</text>
<circle class="r" cx="564" cy="452" r="6.400"/><circle cx="564" cy="452" r="3.200" fill="#7fbde8"/>
<text class="dis" x="576" y="456" textLength="43" lengthAdjust="spacingAndGlyphs">SOCKS <tspan class="u">v</tspan>5</text>

<circle class="r" cx="425" cy="473" r="6.400"/>
<text class="dis" x="437" y="477" textLength="144" lengthAdjust="spacingAndGlyphs"><tspan class="u">A</tspan>utomatic proxy configuration URL</text>
<rect class="f" x="439.500" y="487.500" width="345" height="19" rx="1"/>
<rect x="790" y="487" width="58" height="20" rx="1" fill="#f0f0f0"/>
<text class="dis" x="805" y="501" textLength="27" lengthAdjust="spacingAndGlyphs">R<tspan class="u">e</tspan>load</text>

<text class="lbl" x="418" y="528" style="fill:#9a9a9a" textLength="52" lengthAdjust="spacingAndGlyphs"><tspan class="u">N</tspan>o proxy for</text>
<rect class="f" x="421" y="533.500" width="427" height="41.500" rx="1"/>
<text class="lbl" x="418" y="589" style="fill:#8e8e8e" textLength="189" lengthAdjust="spacingAndGlyphs">Example: .mozilla.org, .net.nz, 192.168.1.0/24</text>
<rect class="c" x="418.500" y="598.500" width="12.500" height="12.500"/>
<text class="lbl" x="436" y="608" style="fill:#a6a6a6" textLength="220" lengthAdjust="spacingAndGlyphs">Do not prompt for authent<tspan class="u">i</tspan>cation if password is saved</text>
<rect class="c" x="418.500" y="621.500" width="12.500" height="12.500"/>
<text class="lbl" x="436" y="631" style="fill:#a6a6a6" textLength="139" lengthAdjust="spacingAndGlyphs">Proxy <tspan class="u">D</tspan>NS when using SOCKS v5</text>
<g clip-path="url(#dlgclip)">
<rect class="c" x="418.500" y="643.500" width="12.500" height="12.500"/>
<text class="lbl" x="436" y="652" style="fill:#a6a6a6" textLength="99" lengthAdjust="spacingAndGlyphs">Enable DNS over HTTPS</text>
</g>

<!-- dialog scrollbar -->
<rect x="854" y="149" width="10" height="498" fill="#fdfdfd" stroke="#f0f0f0" stroke-width=".5"/>
<rect x="855" y="149" width="9" height="10" rx="1" fill="#c9d8f8"/><path d="M857.500 155.500l2-2 2 2" fill="none" stroke="#2b4a8a" stroke-width="1.200"/>
<rect x="855" y="160" width="9" height="437" fill="#b9cdf8"/>
<rect x="857.500" y="376" width="4" height="5" fill="none" stroke="#a4bcf0" stroke-width=".6"/>
<rect x="855" y="638" width="9" height="9" rx="1" fill="#c9d8f8"/><path d="M857.500 641.500l2 2 2-2" fill="none" stroke="#2b4a8a" stroke-width="1.200"/>

<!-- dialog buttons -->
<rect class="btn" x="713" y="652" width="46" height="21" rx="1"/>
<text class="dlg" style="font-size:10px;fill:#222" x="730" y="666" textLength="10" lengthAdjust="spacingAndGlyphs">OK</text>
<rect class="btn" x="765" y="652" width="46" height="21" rx="1"/>
<text class="dlg" style="font-size:10px;fill:#222" x="776" y="666" textLength="22" lengthAdjust="spacingAndGlyphs">Cancel</text>
<rect class="btn" x="816" y="652" width="46" height="21" rx="1"/>
<text class="dlg" style="font-size:10px;fill:#222" x="831.500" y="666" textLength="15" lengthAdjust="spacingAndGlyphs"><tspan class="u">H</tspan>elp</text>
<path d="M877 683v.01M875 685v.01M877 685v.01M873 687v.01M875 687v.01M877 687v.01" stroke="#999" stroke-width="1.200" stroke-linecap="square"/>
</svg>
</body></html>
